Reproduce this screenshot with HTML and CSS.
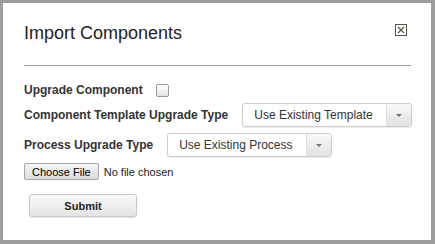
FILE: index.html
```html
<!DOCTYPE html>
<html lang="en">
<head>
    <meta charset="UTF-8">
    <title>Import Components</title>
    <link rel="stylesheet" href="styles.css">
</head>
<body>

    <div class="dialog">
        <div class="dialog-header">
            <h2 class="dialog-title">Import Components</h2>
            <!-- close icon -->
            <span class="close-icon">
                <svg width="12" height="12" viewBox="0 0 12 12">
                    <rect x="0.5" y="0.5" width="11" height="11" fill="none" stroke="#55554a" stroke-width="1"/>
                    <path d="M3 3 L9 9 M9 3 L3 9" stroke="#55554a" stroke-width="1.2" fill="none"/>
                </svg>
            </span>
        </div>
        <hr class="divider">

        <div class="form-row row-check">
            <label class="field-label">Upgrade Component</label>
            <span class="checkbox"></span>
        </div>

        <div class="form-row row-select">
            <label class="field-label">Component Template Upgrade Type</label>
            <div class="select-box">
                <span class="select-value">Use Existing Template</span>
                <span class="select-arrow"></span>
            </div>
        </div>

        <div class="form-row row-select">
            <label class="field-label">Process Upgrade Type</label>
            <div class="select-box">
                <span class="select-value">Use Existing Process</span>
                <span class="select-arrow"></span>
            </div>
        </div>

        <div class="form-row row-file">
            <button class="file-button">Choose File</button>
            <span class="file-name">No file chosen</span>
        </div>

        <button class="submit-button">Submit</button>
    </div>

</body>
</html>
```

FILE: styles.css
```css
body {
    margin: 0;
    padding: 3px 4px 4px 3px;
    background-color: #9e9e9e;
    font-family: 'Liberation Sans', Arial, sans-serif;
    color: #333;
}

.dialog {
    background-color: #fff;
    height: 237px;
    box-sizing: border-box;
    padding: 20px 20px 0 21px;
}

.dialog-header {
    display: flex;
    justify-content: space-between;
    align-items: flex-start;
}

.dialog-title {
    margin: 0;
    font-size: 18px;
    line-height: 20px;
    font-weight: normal;
    color: #222;
}

.close-icon {
    display: block;
    width: 12px;
    height: 12px;
    margin: 1px 4px 0 0;
}

.close-icon svg {
    display: block;
}

.divider {
    margin: 22px 0 0 0;
    border: none;
    border-top: 1px solid #9a9a9a;
    height: 0;
}

.form-row {
    display: flex;
    align-items: center;
    white-space: nowrap;
}

.form-row > * {
    flex-shrink: 0;
}

.field-label {
    font-size: 12px;
    font-weight: bold;
    color: #333;
}

.row-check {
    margin-top: 17px;
    height: 14px;
}

.checkbox {
    width: 11px;
    height: 11px;
    margin-left: 13px;
    border: 1px solid #9a9a9a;
    border-radius: 2px;
    background: linear-gradient(#fff, #e6e6e6);
}

.row-select {
    margin-top: 6px;
}

.select-box {
    display: flex;
    align-items: stretch;
    height: 22px;
    margin-left: 14px;
    border: 1px solid #ccc;
    border-radius: 3px;
    box-shadow: 0 1px 1px rgba(0, 0, 0, 0.08);
    font-size: 12px;
    color: #333;
}

.select-value {
    display: flex;
    align-items: center;
    padding: 0 13px 0 11px;
}

.select-arrow {
    width: 24px;
    background: linear-gradient(#f8f8f8, #e2e2e2);
    border-left: 1px solid #ddd;
    border-radius: 0 2px 2px 0;
    display: flex;
    align-items: center;
    justify-content: center;
}

.select-arrow::after {
    content: "";
    border-left: 3px solid transparent;
    border-right: 3px solid transparent;
    border-top: 3px solid #777;
}

.row-file {
    margin-top: 6px;
    font-size: 11px;
}

.file-button {
    font-family: 'Liberation Sans', Arial, sans-serif;
    font-size: 11px;
    color: #000;
    height: 17px;
    padding: 0 7px;
    margin: 0;
    border: 1px solid #a6a6a6;
    border-radius: 2px;
    background: linear-gradient(#f5f5f5, #dcdcdc);
}

.file-name {
    margin-left: 5px;
    color: #222;
}

.submit-button {
    display: block;
    width: 108px;
    height: 23px;
    margin: 14px 0 0 5px;
    font-family: 'Liberation Sans', Arial, sans-serif;
    font-size: 11px;
    font-weight: bold;
    color: #222;
    border: 1px solid #c8c8c8;
    border-radius: 3px;
    background: linear-gradient(#fafafa, #e4e4e4);
    box-shadow: 0 1px 1px rgba(0, 0, 0, 0.1);
}
```
